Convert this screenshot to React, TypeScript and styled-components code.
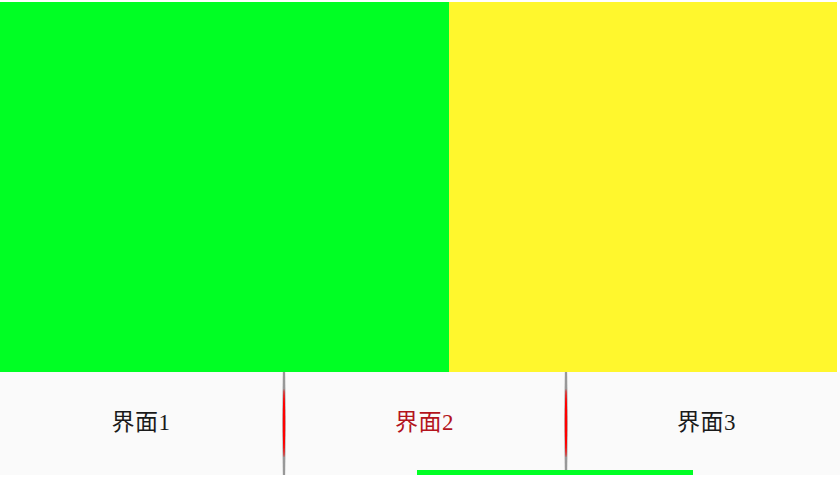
import React from "react";
import styled, { createGlobalStyle } from "styled-components";

const Global = createGlobalStyle`
  html, body { margin: 0; padding: 0; background: #ffffff; overflow: hidden; }
  body { font-family: "Liberation Serif", "Noto Sans CJK SC", serif; }
`;

const Screen = styled.div`
  width: 840px;
  height: 478px;
  display: flex;
  flex-direction: column;
  overflow: hidden;
`;

const Pager = styled.div`
  margin-top: 2px;
  width: 837px;
  height: 370px;
  display: flex;
  overflow: hidden;
`;

const Page = styled.div<{ $color: string; $width?: number }>`
  background: ${(p) => p.$color};
  ${(p) => (p.$width ? `width: ${p.$width}px; flex: none;` : `flex: 1;`)}
`;

const TabBar = styled.div`
  position: relative;
  width: 846px;
  height: 103px;
  background: #fafafa;
  display: grid;
  grid-template-columns: 282px 3px 279px 3px 279px;
`;

const Tab = styled.div<{ $active?: boolean }>`
  display: flex;
  align-items: center;
  justify-content: center;
  font-size: 23px;
  letter-spacing: 0.5px;
  color: ${(p) => (p.$active ? "#b3141c" : "#1a1a1a")};
  padding-bottom: 7px;
`;

const SepWrap = styled.div`
  display: flex;
  justify-content: center;
  height: 103px;
`;

const Indicator = styled.div<{ $left: number; $width: number }>`
  position: absolute;
  left: ${(p) => p.$left}px;
  width: ${(p) => p.$width}px;
  bottom: 0;
  height: 5px;
  background: #00ff24;
`;

function Separator() {
  return (
    <SepWrap>
      <svg width="4" height="103" viewBox="0 0 4 103" style={{ flex: "none" }}>
        <defs>
          <linearGradient id="g" x1="0" x2="1" y1="0" y2="0">
            <stop offset="0" stopColor="#bdbdbd" />
            <stop offset="0.5" stopColor="#8a8a8a" />
            <stop offset="1" stopColor="#bdbdbd" />
          </linearGradient>
        </defs>
        <path d="M0.8 0 L3.2 0 Q4.4 51 3.2 103 L0.8 103 Q-0.4 51 0.8 0 Z" fill="url(#g)" />
        <ellipse cx="2" cy="51" rx="1.2" ry="34" fill="#ff0000" />
      </svg>
    </SepWrap>
  );
}

export default function App() {
  return (
    <Screen>
      <Global />
      <Pager>
        <Page $color="#00ff24" $width={449} />
        <Page $color="#fff72d" />
      </Pager>
      <TabBar>
        <Tab>界面1</Tab>
        <Separator />
        <Tab $active>界面2</Tab>
        <Separator />
        <Tab>界面3</Tab>
        <Indicator $left={417} $width={276} />
      </TabBar>
    </Screen>
  );
}
